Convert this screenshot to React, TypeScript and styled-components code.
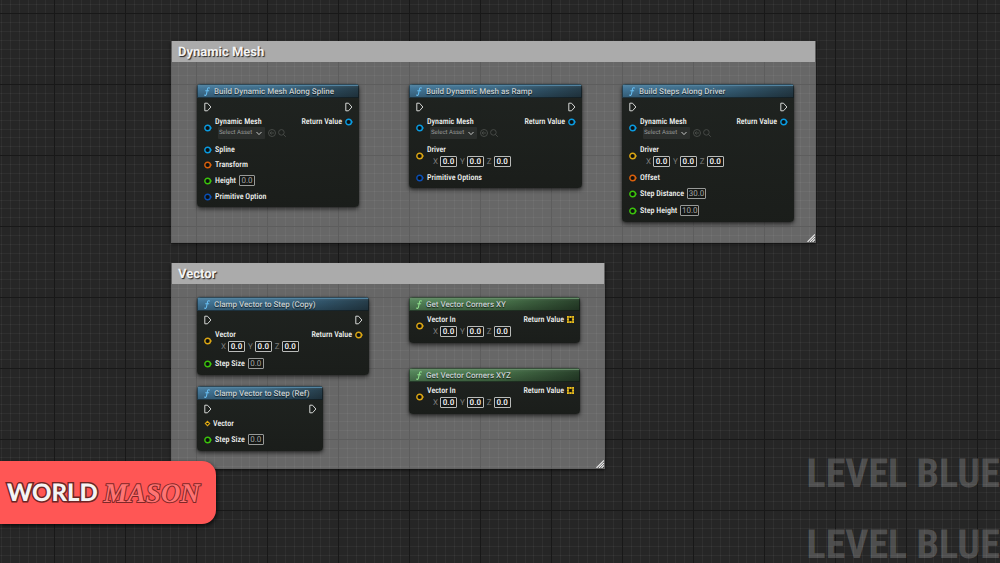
import React from "react";
import styled, { createGlobalStyle } from "styled-components";

const GlobalStyle = createGlobalStyle`
  body {
    margin: 0;
    background: #262626;
    font-family: Roboto, "Liberation Sans", sans-serif;
    text-rendering: geometricPrecision;
  }
  *, *::before, *::after { box-sizing: border-box; }
  input, select, button { text-rendering: inherit; }
`;

const NODE_FONT = 'Roboto, "Liberation Sans", sans-serif';
const LABEL_FONT = '"Roboto Condensed", Roboto, sans-serif';

const PIN = {
  exec: "#d5d7d5",
  object: "#0a9be0",
  struct: "#0b4fb4",
  transform: "#d9600c",
  float: "#3cc40c",
  vector: "#dba614",
};

type PinColor = keyof typeof PIN;

/* ---------- Canvas ---------- */

const Canvas = styled.main`
  position: relative;
  min-height: 100vh;
  overflow: hidden;
  background: #262626;
`;

const GridLayer = styled.svg`
  position: absolute;
  inset: 0;
  width: 100%;
  height: 100%;
`;

const minor = [9, 18, 27, 36, 45, 53, 62];

const Grid = () => (
  <GridLayer aria-hidden="true">
    <defs>
      <pattern id="cells" x="196" y="13" width="71" height="71" patternUnits="userSpaceOnUse">
        {minor.map((p) => (
          <g key={p} fill="#fff" fillOpacity="0.045">
            <rect x={p} y="0" width="1" height="71" />
            <rect x="0" y={p} width="71" height="1" />
          </g>
        ))}
        <rect width="1" height="71" fill="#181818" />
        <rect width="71" height="1" fill="#181818" />
      </pattern>
    </defs>
    <rect width="100%" height="100%" fill="url(#cells)" />
  </GridLayer>
);

/* ---------- Comment boxes ---------- */

const CommentBox = styled.section<{ $x: number; $y: number; $w: number; $h: number }>`
  position: absolute;
  left: ${(p) => p.$x}px;
  top: ${(p) => p.$y}px;
  width: ${(p) => p.$w}px;
  height: ${(p) => p.$h}px;
  padding: 0 1px;
  background: rgba(255, 255, 255, 0.3);
  box-shadow: inset 0 0 0 1px rgba(90, 90, 90, 0.5), 0 1px 3px rgba(0, 0, 0, 0.7);
`;

const CommentTitle = styled.h2`
  margin: 0;
  height: 21px;
  padding: 0 6px;
  background: #ababab;
  color: #f4f4f4;
  font-size: 13px;
  line-height: 24px;
  font-weight: 700;
  text-shadow: 1px 1px 1px #222;
`;

const Resize = styled.svg`
  position: absolute;
  right: 1px;
  bottom: 1px;
  width: 8px;
  height: 8px;
`;

const Comment = ({ title, x, y, w, h, children }: {
  title: string; x: number; y: number; w: number; h: number; children: React.ReactNode;
}) => (
  <CommentBox $x={x} $y={y} $w={w} $h={h}>
    <CommentTitle>{title}</CommentTitle>
    {children}
    <Resize viewBox="0 0 8 8" aria-hidden="true">
      <path d="M0 8 8 0V8Z" fill="#444" />
      <path d="M.5 8 8 .5M3 8 8 3M5.5 8 8 5.5" stroke="#eee" strokeWidth="1.2" />
    </Resize>
  </CommentBox>
);

/* ---------- Nodes ---------- */

const NodeCard = styled.article<{ $x: number; $y: number; $w: number }>`
  position: absolute;
  left: ${(p) => p.$x}px;
  top: ${(p) => p.$y}px;
  width: ${(p) => p.$w}px;
  border-radius: 4px;
  overflow: hidden;
  background: linear-gradient(rgba(29, 33, 30, 0.97), rgba(24, 27, 24, 0.97));
  box-shadow: 0 0 1px 0 rgba(12, 14, 12, 0.9), 0 2px 4px rgba(0, 0, 0, 0.6);
`;

const NodeHeader = styled.header<{ $pure?: boolean }>`
  display: flex;
  align-items: center;
  gap: 4px;
  height: 14px;
  padding: 0 7px;
  background: ${(p) =>
    p.$pure
      ? "linear-gradient(rgba(255,255,255,.12), rgba(0,0,0,0) 30%, rgba(0,0,0,.25)), linear-gradient(90deg, #54855a, #4a754c 50%, #28402a)"
      : "linear-gradient(rgba(255,255,255,.12), rgba(0,0,0,0) 30%, rgba(0,0,0,.25)), linear-gradient(90deg, #44789a, #3b6985 50%, #263d4a)"};
  box-shadow: inset 0 0 0 1px rgba(10, 14, 14, 0.5), inset 0 2px 0 ${(p) => (p.$pure ? "#648c66" : "#5283a0")};
`;

const NodeTitle = styled.h3`
  margin: 0;
  color: #c8d0d2;
  font: 500 8px/15px ${NODE_FONT};
  white-space: nowrap;
  text-shadow: 0 1px 1px rgba(0, 0, 0, 0.7);
`;

const NodeBody = styled.div<{ $pure?: boolean }>`
  display: flex;
  justify-content: space-between;
  padding: ${(p) => (p.$pure ? 4 : 3)}px 6px 6px 7px;
`;

const Pins = styled.div`
  display: flex;
  flex-direction: column;
  gap: 6px;
`;

const OutPins = styled(Pins)`
  align-items: flex-end;
`;

const ExecRow = styled.div`
  display: flex;
  height: 12px;
  align-items: center;
  margin-bottom: -2px;
`;

const PinRow = styled.div<{ $h?: number; $gap?: number }>`
  display: flex;
  align-items: center;
  gap: ${(p) => p.$gap ?? 3}px;
  height: ${(p) => p.$h ?? 9}px;
`;

const FieldColumn = styled.div`
  display: flex;
  flex-direction: column;
`;

const PinLabel = styled.label`
  color: #f0f2f0;
  font: 500 8px/10px ${LABEL_FONT};
  white-space: nowrap;
`;

const FieldLine = styled.div`
  display: flex;
  align-items: center;
  height: 12px;
`;

const AssetLine = styled(FieldLine)`
  padding-left: 3px;
  gap: 2px;
`;

const SelectShell = styled.span`
  position: relative;
  display: flex;
  width: 47px;
  margin-right: 1px;
`;

const AssetSelect = styled.select`
  appearance: none;
  width: 100%;
  height: 12px;
  margin: 0;
  padding: 0 0 0 1px;
  border: 0;
  border-radius: 1px;
  background: #2b2e2c;
  color: #989a98;
  font: 400 6px/12px ${NODE_FONT};
`;

const Chevron = styled.svg`
  position: absolute;
  right: 3px;
  top: 4px;
  width: 6px;
  height: 5px;
  pointer-events: none;
`;

const IconButton = styled.button`
  display: flex;
  width: 8px;
  height: 8px;
  padding: 0;
  border: 0;
  background: none;
  color: #4b4e4b;
`;

const VectorLine = styled(FieldLine)`
  padding-left: 6px;
  gap: 3px;
`;

const AxisLabel = styled.label`
  display: flex;
  align-items: center;
  gap: 2px;
  color: #7c7e7c;
  font: 400 8px/11px ${NODE_FONT};
`;

const NumberInput = styled.input<{ $w: number; $strong?: boolean }>`
  width: ${(p) => p.$w}px;
  height: 11px;
  margin: 0;
  padding: 0;
  border: 1px solid ${(p) => (p.$strong ? "#b9bbb9" : "#989a98")};
  border-radius: 1px;
  background: #151715;
  color: ${(p) => (p.$strong ? "#f2f2f2" : "#a4a6a4")};
  font: ${(p) => (p.$strong ? 600 : 400)} 8px/9px ${NODE_FONT};
  text-align: center;
`;

const FnIcon = ({ color }: { color: string }) => (
  <svg width="6" height="9" viewBox="0 0 6 9" fill="none" stroke={color} strokeWidth="1.1" strokeLinecap="round" aria-hidden="true">
    <path d="M5.4 1C4.4.4 3.7 1 3.5 2L2.5 7C2.2 8.3 1.4 8.6.6 8.1M1.7 3.7H4.7" />
  </svg>
);

const ExecPin = () => (
  <svg width="8" height="10" viewBox="0 0 8 10" fill="none" aria-hidden="true">
    <path d="M.8 1.2H3.5L6.9 5 3.5 8.8H.8Z" stroke={PIN.exec} strokeLinejoin="round" />
  </svg>
);

const DataPin = ({ color }: { color: PinColor }) => (
  <svg width="8" height="8" viewBox="0 0 8 8" aria-hidden="true">
    <path d="M6 1.9 8.1 4 6 6.1Z" fill={PIN[color]} />
    <circle cx="3.6" cy="4" r="2.8" fill="#0d1010" stroke={PIN[color]} strokeWidth="1.4" />
  </svg>
);

const RefPin = () => (
  <svg width="7" height="7" viewBox="0 0 7 7" aria-hidden="true">
    <path d="M3.5 1.3 5.7 3.5 3.5 5.7 1.3 3.5Z" fill="#0d1010" stroke={PIN.vector} strokeWidth="1.1" />
  </svg>
);

const ArrayPin = () => (
  <svg width="7" height="7" viewBox="0 0 7 7" aria-hidden="true">
    <path d="M0 0H7V7H0Z" fill="#7d6415" />
    <path
      d="M0 0H1.8V1.8H0ZM2.6 0H4.4V1.8H2.6ZM5.2 0H7V1.8H5.2ZM0 2.6H1.8V4.4H0ZM5.2 2.6H7V4.4H5.2ZM0 5.2H1.8V7H0ZM2.6 5.2H4.4V7H2.6ZM5.2 5.2H7V7H5.2Z"
      fill="#f0c420"
    />
    <path d="M2.1 2.1H4.9V4.9H2.1Z" fill="#15150d" />
  </svg>
);

type Input =
  | { kind: "plain" | "asset" | "xyz" | "ref"; label: string; color: PinColor }
  | { kind: "number"; label: string; color: PinColor; value: string };

const InputPin = ({ pin, id }: { pin: Input; id: string }) => {
  if (pin.kind === "asset") {
    return (
      <PinRow $h={22}>
        <DataPin color={pin.color} />
        <FieldColumn>
          <PinLabel htmlFor={id}>{pin.label}</PinLabel>
          <AssetLine>
            <SelectShell>
              <AssetSelect id={id}>
                <option>Select Asset</option>
              </AssetSelect>
              <Chevron viewBox="0 0 6 5" fill="none" stroke="#c4c6c4" aria-hidden="true">
                <path d="M.5 1 3 3.6 5.5 1" />
              </Chevron>
            </SelectShell>
            <IconButton type="button" aria-label="Use selected asset">
              <svg width="8" height="8" viewBox="0 0 8 8" fill="none" stroke="currentColor" strokeWidth=".9">
                <circle cx="4" cy="4" r="3.5" />
                <path d="M6 4H2.2M3.7 2.4 2.1 4 3.7 5.6" />
              </svg>
            </IconButton>
            <IconButton type="button" aria-label="Browse to asset">
              <svg width="8" height="8" viewBox="0 0 8 8" fill="none" stroke="currentColor" strokeWidth=".9">
                <circle cx="3.4" cy="3.4" r="2.8" />
                <path d="M5.5 5.5 7.8 7.8" />
              </svg>
            </IconButton>
          </AssetLine>
        </FieldColumn>
      </PinRow>
    );
  }
  if (pin.kind === "xyz") {
    return (
      <PinRow $h={22} role="group" aria-label={pin.label}>
        <DataPin color={pin.color} />
        <FieldColumn>
          <PinLabel as="span">{pin.label}</PinLabel>
          <VectorLine>
            {["X", "Y", "Z"].map((axis) => (
              <AxisLabel key={axis}>
                {axis}
                <NumberInput $w={17} $strong defaultValue="0.0" />
              </AxisLabel>
            ))}
          </VectorLine>
        </FieldColumn>
      </PinRow>
    );
  }
  if (pin.kind === "number") {
    return (
      <PinRow $h={11}>
        <DataPin color={pin.color} />
        <PinLabel htmlFor={id}>{pin.label}</PinLabel>
        <NumberInput id={id} $w={pin.value.length > 3 ? 19 : 16} defaultValue={pin.value} />
      </PinRow>
    );
  }
  return (
    <PinRow $gap={pin.kind === "ref" ? 2 : 3}>
      {pin.kind === "ref" ? <RefPin /> : <DataPin color={pin.color} />}
      <PinLabel as="span">{pin.label}</PinLabel>
    </PinRow>
  );
};

interface NodeProps {
  id: string;
  title: string;
  x: number;
  y: number;
  w: number;
  pure?: boolean;
  inputs: Input[];
  output?: PinColor | "array";
}

const GraphNode = ({ id, title, x, y, w, pure, inputs, output }: NodeProps) => (
  <NodeCard $x={x} $y={y} $w={w}>
    <NodeHeader $pure={pure}>
      <FnIcon color={pure ? "#8fe08c" : "#66bdf0"} />
      <NodeTitle>{title}</NodeTitle>
    </NodeHeader>
    <NodeBody $pure={pure}>
      <Pins>
        {!pure && <ExecRow><ExecPin /></ExecRow>}
        {inputs.map((pin, i) => <InputPin key={pin.label} pin={pin} id={`${id}-${i}`} />)}
      </Pins>
      <OutPins>
        {!pure && <ExecRow><ExecPin /></ExecRow>}
        {output && (
          <PinRow>
            <PinLabel as="span">Return Value</PinLabel>
            {output === "array" ? <ArrayPin /> : <DataPin color={output} />}
          </PinRow>
        )}
      </OutPins>
    </NodeBody>
  </NodeCard>
);

/* ---------- Overlays ---------- */

const Watermark = styled.div`
  position: absolute;
  right: 0;
  bottom: 0;
  display: flex;
  flex-direction: column;
  gap: 35px;
  color: rgba(255, 255, 255, 0.2);
  font: 700 40px/36px "Roboto Condensed", "Liberation Sans Narrow", Roboto, sans-serif;
  white-space: nowrap;
`;

const Brand = styled.div`
  position: absolute;
  left: 0;
  bottom: 39px;
  display: flex;
  align-items: center;
  gap: 6px;
  width: 216px;
  height: 63px;
  padding-left: 7px;
  border-radius: 0 14px 14px 0;
  background: #ff5655;
  box-shadow: 1px 2px 4px rgba(0, 0, 0, 0.7);
  line-height: 32px;
  white-space: nowrap;
`;

const BrandBold = styled.span`
  color: #f4f4f4;
  font-family: Lato, sans-serif;
  font-size: 24px;
  font-weight: 900;
  -webkit-text-stroke: 3px #6d2424;
  paint-order: stroke fill;
`;

const BrandScript = styled.span`
  color: #ff7473;
  font-family: "Liberation Serif", serif;
  font-size: 27px;
  font-style: italic;
  font-weight: 700;
  -webkit-text-stroke: 2px #7d2828;
  paint-order: stroke fill;
`;

const mesh: Input = { kind: "asset", label: "Dynamic Mesh", color: "object" };
const vectorIn: Input = { kind: "xyz", label: "Vector In", color: "vector" };
const stepSize: Input = { kind: "number", label: "Step Size", color: "float", value: "0.0" };

export default function App() {
  return (
    <Canvas>
      <GlobalStyle />
      <Grid />
      <Comment title="Dynamic Mesh" x={171} y={41} w={645} h={202}>
        <GraphNode
          id="spline" title="Build Dynamic Mesh Along Spline" x={26} y={43} w={162} output="object"
          inputs={[
            mesh,
            { kind: "plain", label: "Spline", color: "object" },
            { kind: "plain", label: "Transform", color: "transform" },
            { kind: "number", label: "Height", color: "float", value: "0.0" },
            { kind: "plain", label: "Primitive Option", color: "struct" },
          ]}
        />
        <GraphNode
          id="ramp" title="Build Dynamic Mesh as Ramp" x={238} y={43} w={173} output="object"
          inputs={[
            mesh,
            { kind: "xyz", label: "Driver", color: "vector" },
            { kind: "plain", label: "Primitive Options", color: "struct" },
          ]}
        />
        <GraphNode
          id="steps" title="Build Steps Along Driver" x={451} y={43} w={172} output="object"
          inputs={[
            mesh,
            { kind: "xyz", label: "Driver", color: "vector" },
            { kind: "plain", label: "Offset", color: "transform" },
            { kind: "number", label: "Step Distance", color: "float", value: "30.0" },
            { kind: "number", label: "Step Height", color: "float", value: "10.0" },
          ]}
        />
      </Comment>
      <Comment title="Vector" x={171} y={263} w={434} h={206}>
        <GraphNode
          id="copy" title="Clamp Vector to Step (Copy)" x={26} y={34} w={172} output="vector"
          inputs={[{ kind: "xyz", label: "Vector", color: "vector" }, stepSize]}
        />
        <GraphNode
          id="ref" title="Clamp Vector to Step (Ref)" x={26} y={123} w={126}
          inputs={[{ kind: "ref", label: "Vector", color: "vector" }, stepSize]}
        />
        <GraphNode id="xy" title="Get Vector Corners XY" x={238} y={34} w={171} pure inputs={[vectorIn]} output="array" />
        <GraphNode id="xyz" title="Get Vector Corners XYZ" x={238} y={105} w={171} pure inputs={[vectorIn]} output="array" />
      </Comment>
      <Watermark>
        <div>LEVEL BLUE</div>
        <div>LEVEL BLUE</div>
      </Watermark>
      <Brand>
        <BrandBold>WORLD</BrandBold>
        <BrandScript>MASON</BrandScript>
      </Brand>
    </Canvas>
  );
}
